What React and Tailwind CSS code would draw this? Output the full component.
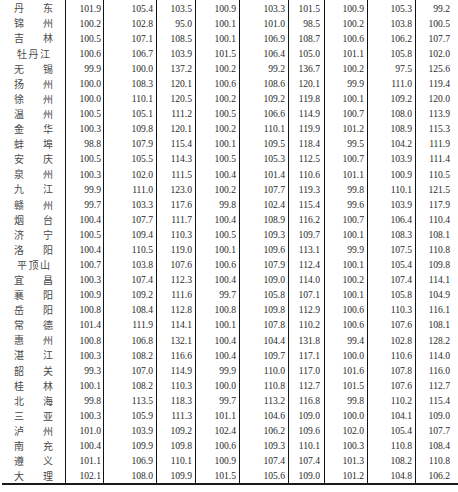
import React from 'react';

// 70-city price index table (partial): name + 9 index columns
const rows = [
  ['丹东', '101.9', '105.4', '103.5', '100.9', '103.3', '101.5', '100.9', '105.3', '99.2'],
  ['锦州', '100.2', '102.8', '95.0', '100.1', '101.0', '98.5', '100.2', '103.8', '100.5'],
  ['吉林', '100.5', '107.1', '108.5', '100.1', '106.9', '108.7', '100.6', '106.2', '107.7'],
  ['牡丹江', '100.6', '106.7', '103.9', '101.5', '106.4', '105.0', '101.1', '105.8', '102.0'],
  ['无锡', '99.9', '100.0', '137.2', '100.2', '99.2', '136.7', '100.2', '97.5', '125.6'],
  ['扬州', '100.0', '108.3', '120.1', '100.6', '108.6', '120.1', '99.9', '111.0', '119.4'],
  ['徐州', '100.0', '110.1', '120.5', '100.2', '109.2', '119.8', '100.1', '109.2', '120.0'],
  ['温州', '100.5', '105.1', '111.2', '100.5', '106.6', '114.9', '100.7', '108.0', '113.9'],
  ['金华', '100.3', '109.8', '120.1', '100.2', '110.1', '119.9', '101.2', '108.9', '115.3'],
  ['蚌埠', '98.8', '107.9', '115.4', '100.1', '109.5', '118.4', '99.5', '104.2', '111.9'],
  ['安庆', '100.5', '105.5', '114.3', '100.5', '105.3', '112.5', '100.7', '103.9', '111.4'],
  ['泉州', '100.3', '102.0', '111.5', '100.4', '101.4', '110.6', '101.1', '100.9', '110.5'],
  ['九江', '99.9', '111.0', '123.0', '100.2', '107.7', '119.3', '99.8', '110.1', '121.5'],
  ['赣州', '99.7', '103.3', '117.6', '99.8', '102.4', '115.4', '99.6', '103.9', '117.9'],
  ['烟台', '100.4', '107.7', '111.7', '100.4', '108.9', '116.2', '100.7', '106.4', '110.4'],
  ['济宁', '100.5', '109.4', '110.3', '100.5', '109.3', '109.7', '100.1', '108.3', '108.1'],
  ['洛阳', '100.4', '110.5', '119.0', '100.1', '109.6', '113.1', '99.9', '107.5', '110.8'],
  ['平顶山', '100.7', '103.8', '107.6', '100.6', '107.9', '112.4', '100.1', '105.4', '109.8'],
  ['宜昌', '100.3', '107.4', '112.3', '100.4', '109.0', '114.0', '100.2', '107.4', '114.1'],
  ['襄阳', '100.9', '109.2', '111.6', '99.7', '105.8', '107.1', '100.1', '105.8', '104.9'],
  ['岳阳', '100.8', '108.4', '112.8', '100.8', '109.8', '112.9', '100.6', '110.3', '116.1'],
  ['常德', '101.4', '111.9', '114.1', '100.1', '107.8', '110.2', '100.6', '107.6', '108.1'],
  ['惠州', '100.8', '106.8', '132.1', '100.4', '104.4', '131.8', '99.4', '102.8', '128.2'],
  ['湛江', '100.3', '108.2', '116.6', '100.4', '109.7', '117.1', '100.0', '110.6', '114.0'],
  ['韶关', '99.3', '107.0', '114.9', '99.9', '110.0', '117.0', '101.6', '107.8', '116.0'],
  ['桂林', '100.1', '108.2', '110.3', '100.0', '110.8', '112.7', '101.5', '107.6', '112.7'],
  ['北海', '99.8', '113.5', '118.3', '99.7', '113.2', '116.8', '99.8', '110.2', '115.4'],
  ['三亚', '100.3', '105.9', '111.3', '101.1', '104.6', '109.0', '100.0', '104.1', '109.0'],
  ['泸州', '101.0', '103.9', '109.2', '102.4', '106.2', '109.6', '102.0', '105.4', '107.7'],
  ['南充', '100.4', '109.9', '109.8', '100.6', '109.3', '110.1', '100.3', '110.8', '108.4'],
  ['遵义', '101.1', '106.9', '110.1', '100.9', '107.4', '107.4', '101.3', '108.2', '110.8'],
  ['大理', '102.1', '108.0', '109.9', '101.5', '105.6', '109.0', '101.2', '104.8', '106.2'],
];

// width + right padding per numeric column (border sits in the last px)
const cols = [
  'w-[38px] pr-[2px] border-r',
  'w-[53px] pr-[3px] border-r',
  'w-[39px] pr-[3px] border-r',
  'w-[44px] pr-[3px] border-r',
  'w-[49px] pr-[3px] border-r',
  'w-[36px] pr-[4px] border-r',
  'w-[43px] pr-[3px] border-r',
  'w-[48px] pr-[3px] border-r',
  'w-[42px] pr-[8px]',
];

const Name = ({ text }) => {
  const chars = Array.from(text);
  const three = chars.length === 3;
  return (
    <div className="w-[66px] shrink-0 border-r border-[#111] flex items-center pt-[1.5px]">
      <div
        className={`flex justify-between ${three ? 'ml-[17px] w-[33px]' : 'ml-[14px] w-[39px]'}`}
        style={{ fontFamily: '"Noto Sans CJK SC", sans-serif' }}
      >
        {chars.map((c, i) => (
          <span key={i} className="text-[10px] leading-none text-[#4a4a4a]">{c}</span>
        ))}
      </div>
    </div>
  );
};

export default function App() {
  return (
    <div className="w-[458px] h-[492px] bg-white overflow-hidden">
      <div className="flex flex-col" style={{ fontFamily: '"Liberation Serif", serif' }}>
        {rows.map((r) => (
          <div key={r[0]} className="flex h-[15.1px]">
            <Name text={r[0]} />
            {r.slice(1).map((v, i) => (
              <div
                key={i}
                className={`${cols[i]} shrink-0 border-[#111] flex items-center justify-end pt-[1.5px] text-[9.6px] leading-none text-[#2a2a2a]`}
              >
                {v}
              </div>
            ))}
          </div>
        ))}
        <div className="h-[2px] ml-[2px] bg-[#1a1a1a]" />
      </div>
    </div>
  );
}
